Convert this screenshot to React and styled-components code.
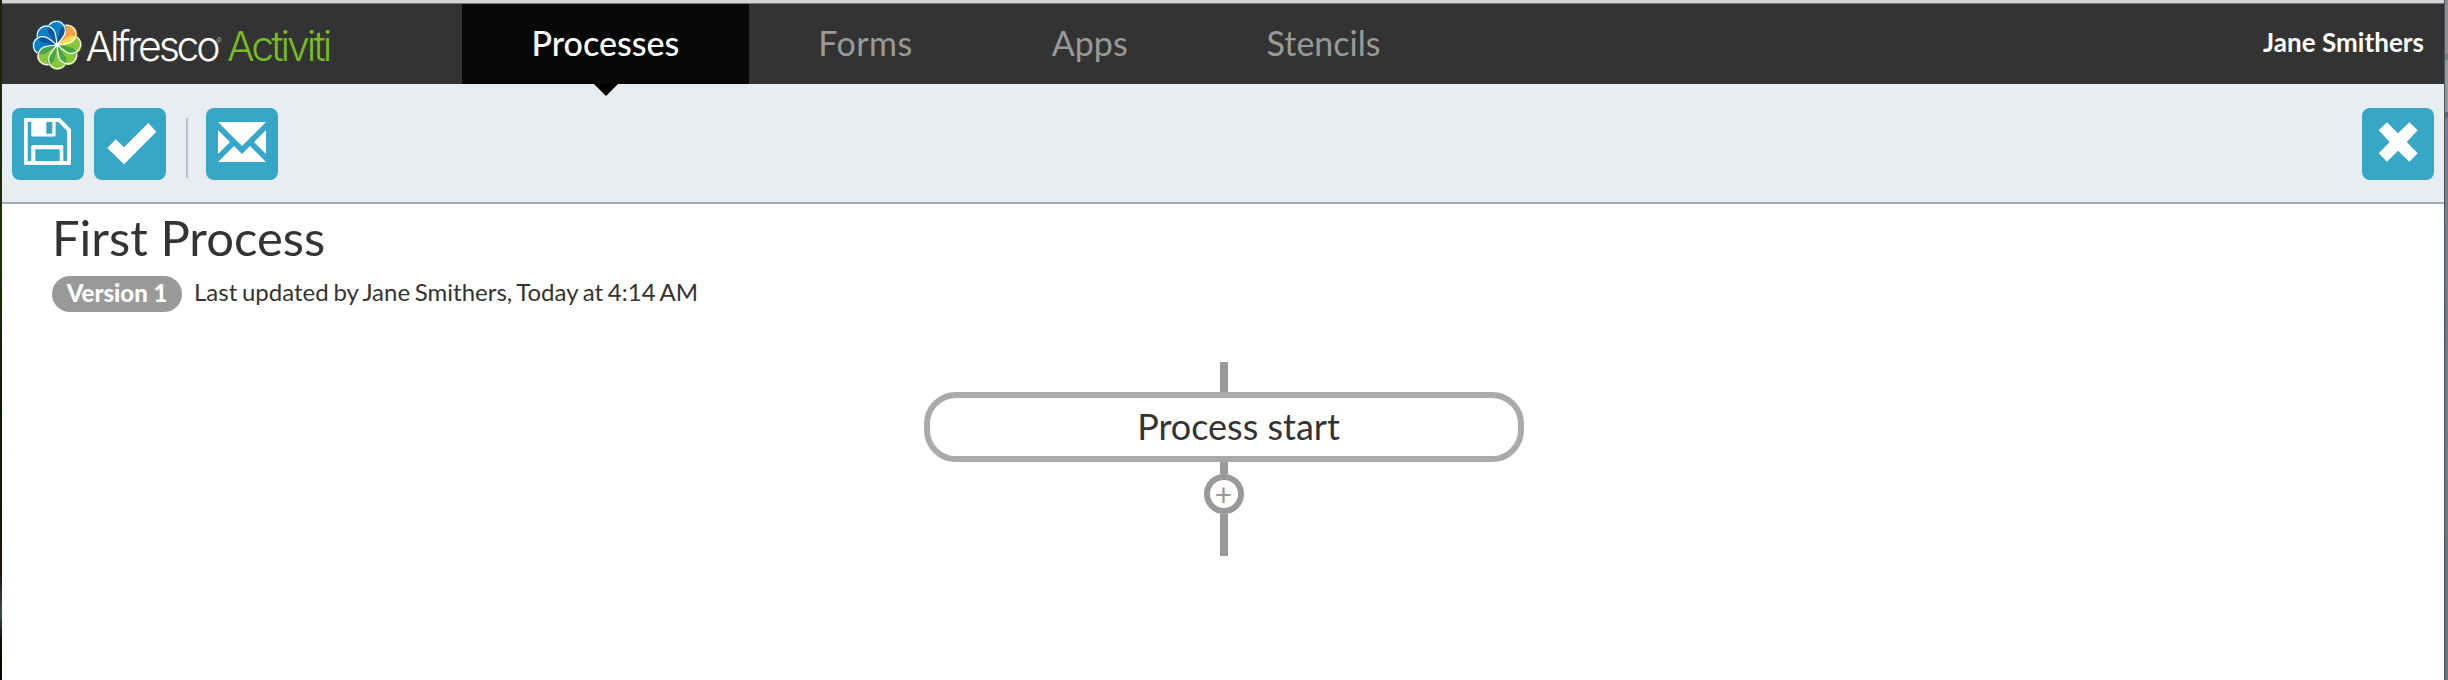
import React from "react";
import styled, { createGlobalStyle } from "styled-components";

const GlobalStyle = createGlobalStyle`
  * { box-sizing: border-box; }
  body {
    margin: 0;
    background: #fff;
    color: #333;
    font-family: Lato, "Liberation Sans", sans-serif;
  }
`;

const Screen = styled.div`
  display: grid;
  grid-template-columns: 2px 1fr 4px;
  width: 2448px;
  height: 680px;
  overflow: hidden;
`;

const DesktopEdge = styled.div`
  background: linear-gradient(#182408, #1d3008 38%, #0d1a04 60%, #1c1206 84%, #3c4c4c 90%, #0c1002 94%, #050500);
`;

const WindowEdge = styled.div`
  border-left: 1px solid #4c5058;
  background: linear-gradient(
    #8e8e90 0 54px,
    #777c8a 54px 60px,
    #999 60px 112px,
    #666b72 112px 118px,
    #7a808b 118px,
    #6b757b
  );
`;

const Page = styled.main`
  display: flex;
  flex-direction: column;
  min-width: 0;
`;

const WindowTop = styled.div`
  height: 4px;
  background: #d4d4d4;
  border-bottom: 1px solid #777;
`;

const Header = styled.header`
  display: flex;
  height: 80px;
  padding-right: 20px;
  background: #333;
`;

const Brand = styled.div`
  display: flex;
  width: 460px;
  padding: 15px 0 0 29px;
`;

const Flower = styled.svg`
  width: 52px;
  height: 52px;
`;

const BrandWord = styled.span`
  margin: 2px 0 0 ${(p) => p.$gap};
  font: 300 41px/50px Inter, "Liberation Sans", sans-serif;
  letter-spacing: ${(p) => p.$spacing};
  color: ${(p) => p.$color};
  white-space: nowrap;
`;

const Registered = styled.span`
  width: 7px;
  margin: 18px 0 0 -1px;
  font: 7px/8px "Liberation Sans", sans-serif;
  color: #bbb;
`;

const Nav = styled.nav`
  display: flex;
`;

const NavItem = styled.a`
  position: relative;
  height: 80px;
  padding: 0 69.5px;
  font-size: 34px;
  font-weight: ${(p) => (p.$active ? 500 : 400)};
  line-height: 78px;
  letter-spacing: ${(p) => p.$spacing || 0};
  color: ${(p) => (p.$active ? "#fff" : "#999")};
  background: ${(p) => (p.$active ? "#080808" : "transparent")};

  &::after {
    content: "";
    display: ${(p) => (p.$active ? "block" : "none")};
    position: absolute;
    top: 80px;
    left: 132px;
    border: 12px solid transparent;
    border-top-color: #000;
    border-bottom: 0;
  }
`;

const UserName = styled.span`
  margin-left: auto;
  font-size: 26px;
  font-weight: 700;
  line-height: 76px;
  letter-spacing: 0.04px;
  color: #fff;
`;

const Toolbar = styled.div`
  display: flex;
  align-items: flex-start;
  gap: 10px;
  height: 120px;
  padding: 24px 10px 0;
  background: #e8edf1;
  border-bottom: 2px solid #a2abbb;
`;

const ToolButton = styled.button`
  width: 72px;
  height: 72px;
  padding: 0;
  border: 0;
  border-radius: 8px;
  background: #36a7c6;
  margin-left: ${(p) => (p.$end ? "auto" : 0)};

  svg {
    display: block;
  }
`;

const Separator = styled.div`
  width: 2px;
  height: 60px;
  margin: 10px 8px 0 10px;
  background: #b9bfc9;
`;

const Title = styled.h1`
  margin: 0 0 6px 50px;
  font-size: 49px;
  font-weight: 400;
  line-height: 66px;
`;

const Meta = styled.div`
  display: flex;
  gap: 12px;
  margin-left: 50px;
  height: 36px;
  font-size: 24px;
  line-height: 32px;
  word-spacing: -1.4px;
`;

const VersionBadge = styled.span`
  width: 130px;
  height: 36px;
  border-radius: 18px;
  background: #999;
  color: #fff;
  font-weight: 900;
  line-height: 33px;
  word-spacing: 0;
  text-align: center;
`;

const Canvas = styled.section`
  display: flex;
  flex-direction: column;
  align-items: center;
  margin-top: 50px;
  padding-left: 2px;
`;

const Connector = styled.div`
  width: 8px;
  height: ${(p) => p.$length}px;
  background: #999;
`;

const StepBox = styled.div`
  width: 600px;
  height: 70px;
  padding-left: 29px;
  border: 6px solid #aaa;
  border-radius: 32px;
  background: #fff;
  font-size: 36px;
  line-height: 56px;
  text-align: center;
`;

const AddStep = styled.button`
  width: 40px;
  height: 40px;
  padding: 0 1px 0 0;
  border: 6px solid #999;
  border-radius: 50%;
  background: #fff;
  color: #999;
  font: 30px/26px Lato, sans-serif;
`;

const BLUE = ["#0a80c8", "#0858a6"];
const ORANGE = ["#faa03c", "#ffdc50"];
const GREEN = ["#8cc63c", "#46a546"];
const PETALS = [BLUE, ORANGE, GREEN, GREEN, GREEN, GREEN, BLUE, BLUE];

// Each petal is a teardrop: a circle of RADIUS at DIST from the centre, closed by two tangents.
const DIST = 15.6;
const RADIUS = 9.2;

function at(distance, degrees) {
  const a = (degrees * Math.PI) / 180;
  return [distance * Math.sin(a), -distance * Math.cos(a)];
}

const half = (Math.asin(RADIUS / DIST) * 180) / Math.PI;
const tangent = Math.sqrt(DIST * DIST - RADIUS * RADIUS);
const s = Math.sin(Math.PI / 8);
const notch = DIST * Math.cos(Math.PI / 8) + Math.sqrt(RADIUS * RADIUS - DIST * DIST * s * s);

const T1 = at(tangent, half);
const T0 = at(tangent, -half);
const C1 = at(tangent * 0.55, half + 4);
const C0 = at(tangent * 0.55, -half - 4);
const N0 = at(notch, -22.5);
const N1 = at(notch, 22.5);
const L0 = at(tangent, 45 - half);
const CL = at(tangent * 0.55, 41 - half);

const PETAL = `M0 0Q${C1} ${T1}A${RADIUS} ${RADIUS} 0 1 0 ${T0}Q${C0} 0 0Z`;
const OVERLAP = `M0 0Q${C1} ${T1}A${RADIUS} ${RADIUS} 0 0 0 ${N1}A${RADIUS} ${RADIUS} 0 0 0 ${L0}Q${CL} 0 0Z`;
const EDGE = `M0 0Q${C1} ${T1}A${RADIUS} ${RADIUS} 0 0 0 ${N0}`;

function FlowerLogo() {
  return (
    <Flower viewBox="-26 -26 52 52">
      {PETALS.map((c, i) => (
        <path key={i} d={PETAL} fill={c[0]} transform={`rotate(${i * 45})`} />
      ))}
      {PETALS.map((c, i) => (
        <path key={i} d={OVERLAP} fill={c[1]} transform={`rotate(${i * 45})`} />
      ))}
      {PETALS.map((c, i) => (
        <path key={i} d={EDGE} fill="none" stroke="#fff" strokeWidth="1.2" transform={`rotate(${i * 45})`} />
      ))}
      <circle r="2" fill="#fff" />
    </Flower>
  );
}

function Glyph({ d }) {
  return (
    <svg width="72" height="72" viewBox="0 0 72 72">
      <path fill="#fff" fillRule="evenodd" d={d} />
    </svg>
  );
}

const SAVE =
  "M13 10H48L59 21.3V56L58 57H13L12 56V11ZM15.7 14V53H19.3V38L20.3 37H50.3L51.3 38V53H55V23L46.3 14H43.6V27.6L42.6 28.6H20.3L19.3 27.6V14ZM34.3 14V25.7H40.3V14ZM23.3 41.3V53H47.7V41.3Z";
const CHECK = "M13.3 40L21.7 31.3L30 39.3L54.3 15L62.3 23.7L30 56.3Z";
const MAIL = "M12 14H60L36 38ZM12 22L24 34L12 46ZM60 22L48 34L60 46ZM12 54L28 38L36 46L44 38L60 54Z";
const CROSS =
  "M25 14.3L36 25.3L47.3 14.3L55.7 22.3L44.7 34L55.7 45.3L47.3 53.7L36 42.7L25 53.7L16.7 45.3L27.7 34L16.7 22.3Z";

export default function App() {
  return (
    <Screen>
      <GlobalStyle />
      <DesktopEdge />
      <Page>
        <WindowTop />
        <Header>
          <Brand>
            <FlowerLogo />
            <BrandWord $color="#fff" $gap="2.5px" $spacing="-3.2px">Alfresco</BrandWord>
            <Registered>®</Registered>
            <BrandWord $color="#78be20" $gap="3.5px" $spacing="-3px">Activiti</BrandWord>
          </Brand>
          <Nav>
            <NavItem $active>Processes</NavItem>
            <NavItem $spacing="0.5px">Forms</NavItem>
            <NavItem>Apps</NavItem>
            <NavItem>Stencils</NavItem>
          </Nav>
          <UserName>Jane Smithers</UserName>
        </Header>
        <Toolbar>
          <ToolButton aria-label="Save"><Glyph d={SAVE} /></ToolButton>
          <ToolButton aria-label="Validate"><Glyph d={CHECK} /></ToolButton>
          <Separator />
          <ToolButton aria-label="Feedback"><Glyph d={MAIL} /></ToolButton>
          <ToolButton $end aria-label="Close"><Glyph d={CROSS} /></ToolButton>
        </Toolbar>
        <Title>First Process</Title>
        <Meta>
          <VersionBadge>Version 1</VersionBadge>
          <span>Last updated by Jane Smithers, Today at 4:14 AM</span>
        </Meta>
        <Canvas>
          <Connector $length={30} />
          <StepBox>Process start</StepBox>
          <Connector $length={12} />
          <AddStep aria-label="Add step">+</AddStep>
          <Connector $length={42} />
        </Canvas>
      </Page>
      <WindowEdge />
    </Screen>
  );
}
